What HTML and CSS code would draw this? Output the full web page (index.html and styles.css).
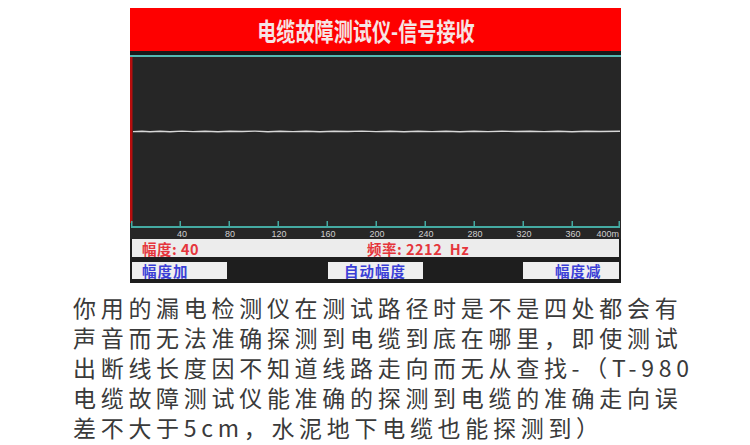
FILE: index.html
```html
<!DOCTYPE html>
<html lang="zh-CN">
<head>
<meta charset="utf-8">
<title>电缆故障测试仪-信号接收</title>
<link rel="stylesheet" href="styles.css">
</head>
<body>
<div class="page">
  <div class="device">
    <div class="title"><span class="title-text">电缆故障测试仪-信号接收</span></div>
    <div class="band"></div>
    <svg class="scope" width="491" height="182" viewBox="0 0 491 182">
      <rect x="0" y="0" width="491" height="182" fill="#262626"/>
      <!-- left marker -->
      <rect x="0" y="0" width="2.5" height="166" fill="#b80d0d"/>
      <!-- received signal trace -->
      <polyline fill="none" stroke="#d8d8d8" stroke-width="1.4"
        points="3,74.6 12,74.2 20,74.8 30,74.3 40,74.7 52,74.1 63,74.6 75,74.3 88,74.8 100,74.2 112,74.5 125,74.1 138,74.7 150,74.3 163,74.6 176,74.2 190,74.7 204,74.3 218,74.5 232,74.1 246,74.6 260,74.3 274,74.7 288,74.2 302,74.6 316,74.3 330,74.7 344,74.2 358,74.6 372,74.3 386,74.5 400,74.2 414,74.6 428,74.3 442,74.7 456,74.2 470,74.5 490,74.3"/>
      <!-- distance axis -->
      <rect x="1" y="169" width="489" height="2" fill="#44aaa2"/>
      <g fill="#44aaa2">
        <rect x="1" y="164" width="1.5" height="6"/>
        <rect x="49.5" y="164" width="1.5" height="6"/>
        <rect x="98.5" y="164" width="1.5" height="6"/>
        <rect x="147.5" y="164" width="1.5" height="6"/>
        <rect x="196.5" y="164" width="1.5" height="6"/>
        <rect x="245.5" y="164" width="1.5" height="6"/>
        <rect x="294.5" y="164" width="1.5" height="6"/>
        <rect x="343.5" y="164" width="1.5" height="6"/>
        <rect x="392.5" y="164" width="1.5" height="6"/>
        <rect x="441.5" y="164" width="1.5" height="6"/>
        <rect x="488.5" y="164" width="1.5" height="6"/>
      </g>
      <g class="tick-labels" fill="#cfcfcf" text-anchor="middle">
        <text x="52" y="179.5">40</text>
        <text x="100" y="179.5">80</text>
        <text x="149" y="179.5">120</text>
        <text x="198" y="179.5">160</text>
        <text x="247" y="179.5">200</text>
        <text x="296" y="179.5">240</text>
        <text x="345" y="179.5">280</text>
        <text x="394" y="179.5">320</text>
        <text x="443" y="179.5">360</text>
        <text x="489" y="179.5" text-anchor="end">400m</text>
      </g>
    </svg>
    <div class="status">
      <span class="status-amp">幅度: 40</span>
      <span class="status-freq">频率: 2212&nbsp;&nbsp;Hz</span>
    </div>
    <div class="buttons">
      <div class="btn btn-left">幅度加</div>
      <div class="btn btn-mid">自动幅度</div>
      <div class="btn btn-right">幅度减</div>
    </div>
  </div>
  <p class="desc">你用的漏电检测仪在测试路径时是不是四处都会有<br>声音而无法准确探测到电缆到底在哪里，即使测试<br>出断线长度因不知道线路走向而无从查找-（T-980<br>电缆故障测试仪能准确的探测到电缆的准确走向误<br>差不大于5cm，水泥地下电缆也能探测到）</p>
</div>
</body>
</html>
```

FILE: styles.css
```css
html, body {
  margin: 0;
  padding: 0;
  background: #ffffff;
}

.page {
  width: 750px;
  height: 445px;
  overflow: hidden;
  padding-top: 8px;
  box-sizing: border-box;
}

.device {
  margin-left: 130px;
  width: 491px;
  background: #1e1e1e;
  display: flex;
  flex-direction: column;
  padding-bottom: 4px;
}

.title {
  height: 43px;
  background: #fe0000;
  display: flex;
  align-items: center;
  justify-content: center;
  padding-right: 20px;
}

.title-text {
  display: inline-block;
  font-family: "Noto Sans CJK SC", sans-serif;
  font-weight: 700;
  font-size: 25.5px;
  line-height: 1;
  color: #f6e4e4;
  transform: scaleX(0.75);
  white-space: nowrap;
}

.band {
  height: 4px;
  background: #1a1a1a;
  border-bottom: 2px solid #55b8b2;
}

.scope {
  display: block;
}

.tick-labels {
  font-family: "Liberation Sans", sans-serif;
  font-size: 9px;
}

.status {
  margin: 0 2px 0 2px;
  height: 18px;
  background: #ececec;
  display: flex;
  align-items: center;
  font-family: "Noto Sans CJK SC", sans-serif;
  font-weight: 700;
  font-size: 14.5px;
  color: #e5363c;
  letter-spacing: 0.5px;
}

.status-amp {
  margin-left: 10px;
  width: 225px;
}

.status-freq {
  white-space: pre;
}

.buttons {
  margin: 5px 2px 0 2px;
  height: 17px;
  display: flex;
  justify-content: space-between;
}

.btn {
  width: 95px;
  background: #efefef;
  font-family: "Noto Sans CJK SC", sans-serif;
  font-weight: 700;
  font-size: 14.5px;
  line-height: 17px;
  color: #3b3fd6;
  letter-spacing: 1px;
  white-space: nowrap;
}

.btn-left {
  padding-left: 10px;
  box-sizing: border-box;
}

.btn-mid {
  text-align: center;
}

.btn-right {
  width: 96px;
  padding-left: 32px;
  box-sizing: border-box;
}

.desc {
  margin: 9px 0 0 73px;
  font-family: "Noto Sans CJK SC", sans-serif;
  font-size: 23px;
  line-height: 30px;
  letter-spacing: 4.7px;
  color: #3a3a3a;
  white-space: nowrap;
}
```
